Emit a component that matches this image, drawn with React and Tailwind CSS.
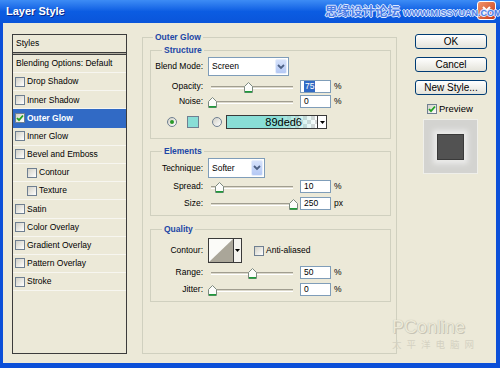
import React from "react";

const Check = ({ checked }) => (
  <span className="flex w-[10px] h-[10px] shrink-0 border border-[#6f7f91] bg-linear-to-br from-[#d2d0c6] to-white items-center justify-center">
    {checked && (
      <svg width="8" height="8" viewBox="0 0 8 8">
        <path d="M1 4 L3 6.2 L7 1.5" fill="none" stroke="#21a121" strokeWidth="1.8" />
      </svg>
    )}
  </span>
);

const Radio = ({ on }) => (
  <span className="flex w-[10px] h-[10px] shrink-0 rounded-full border border-[#6f7f91] bg-linear-to-br from-[#d2d0c6] to-white items-center justify-center">
    {on && <span className="w-[4px] h-[4px] rounded-full bg-[#2a9a2a]" />}
  </span>
);

const Label = ({ children }) => (
  <div className="w-[52px] shrink-0 text-right">{children}</div>
);

const Num = ({ children }) => (
  <div className="w-[31px] h-full shrink-0 border border-[#7f9db9] bg-white flex items-center pl-[3px]">
    {children}
  </div>
);

const Slider = ({ pos }) => (
  <div className="relative w-[92px] h-full ml-[5px] shrink-0">
    <div className="absolute left-[3px] w-[82px] top-[6px] h-[3px] border-t border-[#a19e90] border-b border-b-white bg-[#dcd9cc]" />
    <svg
      className="absolute top-[2px]"
      style={{ left: pos - 1 }}
      width="9"
      height="11"
      viewBox="0 0 9 11"
    >
      <path d="M0.5 4.5 L4.5 0.5 L8.5 4.5 V10.5 H0.5 Z" fill="#fcfcfa" stroke="#7d8a80" />
      <path d="M1 9.8 H8" stroke="#1f9a3a" strokeWidth="1.6" />
    </svg>
  </div>
);

const SliderRow = ({ label, pos, value, unit, selected, className }) => (
  <div className={"flex items-center h-[13px] " + className}>
    <Label>{label}</Label>
    <Slider pos={pos} />
    <Num>
      {selected ? (
        <span className="bg-[#316ac5] text-white h-[11px] flex items-center px-[1px]">{value}</span>
      ) : (
        value
      )}
    </Num>
    <span className="ml-[3px]">{unit}</span>
  </div>
);

const Select = ({ text, w }) => (
  <div
    className="ml-[5px] h-full border border-[#7f9db9] bg-white flex items-center pl-[3px] pr-[1px]"
    style={{ width: w }}
  >
    <span className="flex-1">{text}</span>
    <span className="w-[12px] h-[calc(100%-2px)] rounded-[2px] bg-linear-to-b from-[#d6e2fb] to-[#b4c8f4] border border-[#e6eefc] flex items-center justify-center">
      <svg width="8" height="6" viewBox="0 0 8 6">
        <path d="M1 1 L4 4 L7 1" fill="none" stroke="#4d6185" strokeWidth="1.8" />
      </svg>
    </span>
  </div>
);

const Legend = ({ children, ml }) => (
  <legend className={"px-[2px] font-bold text-[#2146a6] leading-[12px] " + ml}>{children}</legend>
);

const rows = [
  { t: "Drop Shadow" },
  { t: "Inner Shadow" },
  { t: "Outer Glow", sel: true },
  { t: "Inner Glow" },
  { t: "Bevel and Emboss" },
  { t: "Contour", ind: true },
  { t: "Texture", ind: true },
  { t: "Satin" },
  { t: "Color Overlay" },
  { t: "Gradient Overlay" },
  { t: "Pattern Overlay" },
  { t: "Stroke" },
];

export default function App() {
  return (
    <div className="relative w-[500px] h-[368px] flex flex-col bg-[#0b4fd8] font-['Liberation_Sans',Arial,sans-serif] text-[8.5px] leading-none text-black overflow-hidden">
      {/* Title bar */}
      <div className="h-[23px] flex items-center shrink-0 bg-linear-to-b from-[#3d8cf5] via-[#0b5ce2] to-[#0a55da]">
        <span className="pl-[6px] text-[11px] font-bold text-white [text-shadow:1px_1px_0_#0a2a8a]">
          Layer Style
        </span>
        <div className="ml-auto mr-[4px] self-start mt-[1px] w-[19px] h-[19px] rounded-[3px] border border-white bg-linear-to-br from-[#f0936b] to-[#c73510] flex items-center justify-center">
          <svg width="11" height="11" viewBox="0 0 11 11">
            <path d="M2 2 L9 9 M9 2 L2 9" stroke="#fff" strokeWidth="2" />
          </svg>
        </div>
      </div>

      {/* Body */}
      <div className="flex-1 ml-[3px] mr-[4px] mb-[5px] bg-[#ece9d8] flex items-start pl-[9px] pt-[8px]">
        {/* Styles list */}
        <div className="mt-[3px] w-[115px] h-[320px] border border-[#3c3c3c] flex flex-col shrink-0">
          <div className="h-[17px] pl-[3px] flex items-center">Styles</div>
          <div className="h-[3px] border-y border-[#3c3c3c] bg-[#aeab9e]" />
          <div className="h-[18px] pl-[3px] flex items-center border-b border-[#f7f6f0]">
            Blending Options: Default
          </div>
          {rows.map((r) => (
            <div
              key={r.t}
              className={
                "h-[18.2px] flex items-center gap-[2px] border-b " +
                (r.ind ? "pl-[14px] " : "pl-[2px] ") +
                (r.sel
                  ? "bg-[#316ac5] text-white font-bold border-[#316ac5]"
                  : "border-[#f7f6f0]")
              }
            >
              <Check checked={r.sel} />
              <span>{r.t}</span>
            </div>
          ))}
        </div>

        {/* Outer Glow group */}
        <fieldset className="ml-[15px] w-[255px] h-[323px] border border-[#d0d0bf] pl-[7px] pr-[5px] pt-[1px] shrink-0">
          <Legend ml="ml-[3px]">Outer Glow</Legend>

          {/* Structure */}
          <fieldset className="border border-[#d0d0bf] p-0 pb-[9px]">
            <Legend ml="ml-[11px]">Structure</Legend>
            <div className="flex items-center h-[19px] mt-[1px]">
              <Label>Blend Mode:</Label>
              <Select text="Screen" w={81} />
            </div>
            <SliderRow className="mt-[4px]" label="Opacity:" pos={37} value="75" unit="%" selected />
            <SliderRow className="mt-[2px]" label="Noise:" pos={1} value="0" unit="%" />
            <div className="flex items-center h-[14px] mt-[7px]">
              <span className="ml-[16px]">
                <Radio on />
              </span>
              <span className="ml-[10px] w-[12px] h-[12px] bg-[#89ded6] border border-[#6f7f91]" />
              <span className="ml-[13px]">
                <Radio />
              </span>
              <div className="ml-[4px] w-[92px] h-full border border-[#3a3a3a] [background-image:repeating-conic-gradient(#d8d8d8_0_25%,#ffffff_0_50%)] [background-size:8px_8px]">
                <div className="w-full h-full bg-linear-to-r from-[#89ded6] from-55% to-[#89ded6]/0 flex items-center justify-end pr-[15px] text-[11px]">
                  89ded6
                </div>
              </div>
              <div className="w-[9px] h-full border border-l-0 border-[#3a3a3a] bg-white flex items-center justify-center">
                <svg width="5" height="3" viewBox="0 0 5 3">
                  <path d="M0 0 H5 L2.5 3 Z" fill="#000" />
                </svg>
              </div>
            </div>
          </fieldset>

          {/* Elements */}
          <fieldset className="mt-[6px] border border-[#d0d0bf] p-0 pb-[5px]">
            <Legend ml="ml-[11px]">Elements</Legend>
            <div className="flex items-center h-[20px] mt-[1px]">
              <Label>Technique:</Label>
              <Select text="Softer" w={57} />
            </div>
            <SliderRow className="mt-[2px]" label="Spread:" pos={8} value="10" unit="%" />
            <SliderRow className="mt-[4px]" label="Size:" pos={82} value="250" unit="px" />
          </fieldset>

          {/* Quality */}
          <fieldset className="mt-[7px] border border-[#d0d0bf] p-0 pb-[5px]">
            <Legend ml="ml-[11px]">Quality</Legend>
            <div className="flex items-center h-[25px] mt-[3px]">
              <Label>Contour:</Label>
              <div className="ml-[5px] w-[34px] h-full border border-[#3a3a3a] flex bg-white">
                <svg width="24" height="23" viewBox="0 0 24 23" className="shrink-0">
                  <rect width="24" height="23" fill="#fbfbf8" />
                  <path d="M0 23 L24 0 V23 Z" fill="#aaa699" />
                </svg>
                <div className="flex-1 border-l border-[#3a3a3a] bg-[#f4f3ee] flex items-center justify-center">
                  <svg width="5" height="3" viewBox="0 0 5 3">
                    <path d="M0 0 H5 L2.5 3 Z" fill="#000" />
                  </svg>
                </div>
              </div>
              <span className="ml-[12px]">
                <Check />
              </span>
              <span className="ml-[2px]">Anti-aliased</span>
            </div>
            <SliderRow className="mt-[3px]" label="Range:" pos={41} value="50" unit="%" />
            <SliderRow className="mt-[4px]" label="Jitter:" pos={1} value="0" unit="%" />
          </fieldset>
        </fieldset>

        {/* Right column */}
        <div className="ml-[18px] mt-[3px] w-[72px] flex flex-col shrink-0">
          {["OK", "Cancel", "New Style..."].map((b, i) => (
            <div
              key={b}
              className={
                "h-[15px] w-[72px] rounded-[3px] border border-[#003c74] bg-linear-to-b from-white to-[#e4e3da] flex items-center justify-center text-[10px] " +
                (i ? "mt-[8px]" : "")
              }
            >
              {b}
            </div>
          ))}
          <div className="mt-[9px] h-[10px] flex items-center">
            <span className="ml-[12px]">
              <Check checked />
            </span>
            <span className="ml-[2px] text-[9.5px]">Preview</span>
          </div>
          <div className="mt-[5px] ml-[8px] w-[55px] h-[55px] bg-[#d3d3d0] border border-[#efefea] flex items-center justify-center">
            <div className="w-[27px] h-[26px] bg-[#525252] border border-[#3a3a3a] shadow-[0_0_5px_4px_#ebebea]" />
          </div>
        </div>
      </div>

      {/* Watermarks */}
      <div className="absolute left-[325px] top-[5px] text-[12.5px] font-['Noto_Sans_CJK_SC',sans-serif] font-bold text-[#4a7de6] [text-shadow:1px_0_#dfe9ff,-1px_0_#dfe9ff,0_1px_#dfe9ff,0_-1px_#dfe9ff]">
        思缘设计论坛
      </div>
      <div className="absolute left-[403px] top-[9px] text-[9px] font-bold text-[#4a7de6] [text-shadow:1px_0_#dfe9ff,-1px_0_#dfe9ff,0_1px_#dfe9ff,0_-1px_#dfe9ff]">
        WWW.MISSYUAN.COM
      </div>
      <div className="absolute left-[392px] top-[320px] flex flex-col items-start pointer-events-none">
        <span className="text-[18px] leading-[15px] text-[#ece9d8] [text-shadow:0_0_1px_#b8b5a6,1px_1px_0_#c9c6b8]">
          PConline
        </span>
        <span className="mt-[4px] text-[9.5px] leading-[10px] tracking-[5px] font-['Noto_Sans_CJK_SC',sans-serif] text-[#d4d1c2]">
          太平洋电脑网
        </span>
      </div>
    </div>
  );
}
